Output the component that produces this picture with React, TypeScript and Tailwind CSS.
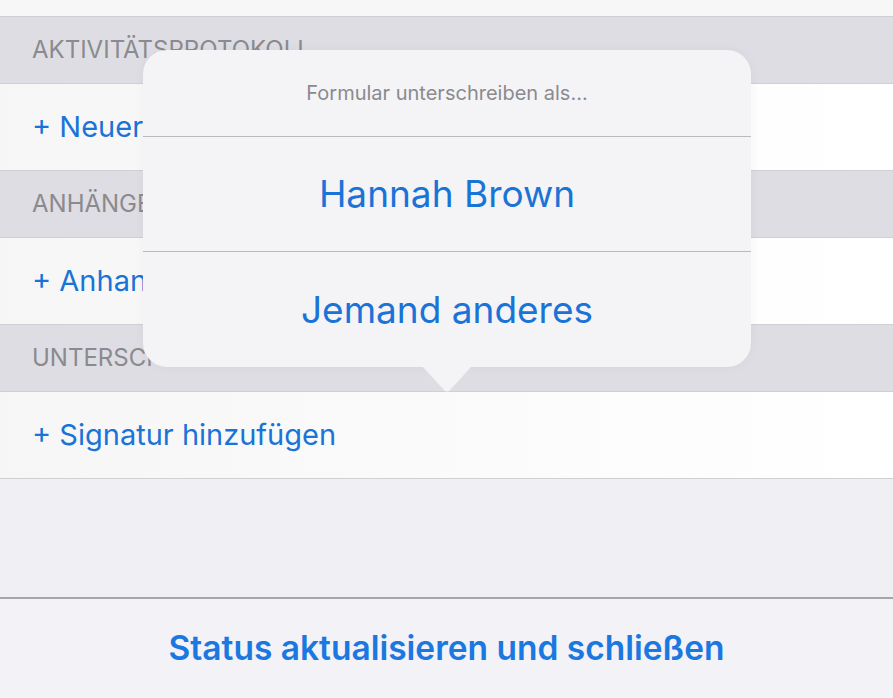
const font = { fontFamily: 'Inter, "Liberation Sans", Arial, sans-serif' };

function SectionHeader({ label }: { label: string }) {
  return (
    <div className="flex h-[67px] items-center border-b border-[#cfcfd4] bg-[#dedde3] px-8">
      <span className="text-[24px] text-[#8a8a8f]">{label}</span>
    </div>
  );
}

function ActionRow({ label }: { label: string }) {
  return (
    <div className="flex h-[87px] items-center border-b border-[#cfcfd4] bg-gradient-to-r from-[#f6f6f7] to-white px-8">
      <span className="text-[29px] text-[#1a73d6]">{label}</span>
    </div>
  );
}

export default function App() {
  return (
    <div style={font} className="relative flex h-[698px] w-[893px] flex-col overflow-hidden bg-[#efeff4]">
      <div className="h-[17px] border-b border-[#cfcfd4] bg-[#f7f7f7]" />
      <SectionHeader label="AKTIVITÄTSPROTOKOLL" />
      <ActionRow label="+ Neuer Eintrag" />
      <SectionHeader label="ANHÄNGE" />
      <ActionRow label="+ Anhang hinzufügen" />
      <SectionHeader label="UNTERSCHRIFT" />
      <ActionRow label="+ Signatur hinzufügen" />
      <div className="flex-1" />
      <div className="flex h-[101px] items-center justify-center border-t-2 border-[#a5a5aa] bg-[#f2f2f7]">
        <span className="text-[33.5px] font-semibold text-[#1a78e0]">Status aktualisieren und schließen</span>
      </div>

      {/* Popover */}
      <div className="absolute left-[143px] top-[50px] w-[608px]">
        <div className="overflow-hidden rounded-[24px] bg-[#f4f4f6] shadow-[0_0_12px_rgba(0,0,0,0.04)]">
          <div className="flex h-[87px] items-center justify-center border-b border-[#b9b9be]">
            <span className="text-[20px] text-[#8a8a8f]">Formular unterschreiben als...</span>
          </div>
          <div className="flex h-[115px] items-center justify-center border-b border-[#b9b9be]">
            <span className="text-[37px] text-[#1a73d6]">Hannah Brown</span>
          </div>
          <div className="flex h-[115px] items-center justify-center">
            <span className="text-[37px] text-[#1a73d6]">Jemand anderes</span>
          </div>
        </div>
        <svg className="absolute left-[279px] top-[316px]" width="50" height="26" viewBox="0 0 50 26">
          <path d="M0 0 L22 24 Q25 27 28 24 L50 0 Z" fill="#f4f4f6" />
        </svg>
      </div>
    </div>
  );
}
